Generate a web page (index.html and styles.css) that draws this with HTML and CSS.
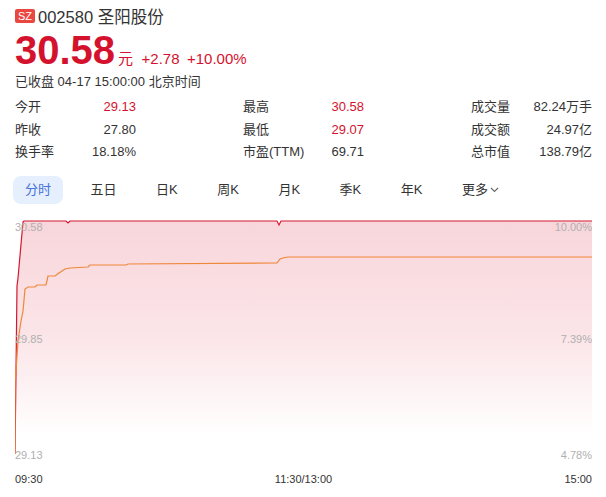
FILE: index.html
```html
<!DOCTYPE html>
<html lang="zh-CN">
<head>
  <meta charset="UTF-8" />
  <meta name="viewport" content="width=device-width, initial-scale=1" />
  <title>圣阳股份 002580</title>
  <link rel="stylesheet" href="styles.css">
</head>
<body>
  <div class="quote">
    <div class="title-row">
      <span class="market">SZ</span>
      <span class="name">002580 圣阳股份</span>
    </div>

    <div class="price-row">
      <span class="price">30.58</span><span class="unit">元</span>
      <span class="change">+2.78</span>
      <span class="change">+10.00%</span>
    </div>

    <div class="status">已收盘 04-17 15:00:00 北京时间</div>

    <div class="stats">
      <div class="stat-col">
        <div class="stat"><span>今开</span><span class="up">29.13</span></div>
        <div class="stat"><span>昨收</span><span>27.80</span></div>
        <div class="stat"><span>换手率</span><span>18.18%</span></div>
      </div>
      <div class="stat-col">
        <div class="stat"><span>最高</span><span class="up">30.58</span></div>
        <div class="stat"><span>最低</span><span class="up">29.07</span></div>
        <div class="stat"><span>市盈(TTM)</span><span>69.71</span></div>
      </div>
      <div class="stat-col">
        <div class="stat"><span>成交量</span><span>82.24万手</span></div>
        <div class="stat"><span>成交额</span><span>24.97亿</span></div>
        <div class="stat"><span>总市值</span><span>138.79亿</span></div>
      </div>
    </div>

    <div class="tabs">
      <span class="tab active">分时</span>
      <span class="tab">五日</span>
      <span class="tab">日K</span>
      <span class="tab">周K</span>
      <span class="tab">月K</span>
      <span class="tab">季K</span>
      <span class="tab">年K</span>
      <span class="tab">更多<svg class="chev" width="9" height="6" viewBox="0 0 9 6"><polyline points="1,1 4.5,4.5 8,1" fill="none" stroke="#666" stroke-width="1.1"/></svg></span>
    </div>

    <div class="chart">
      <svg width="577" height="240" viewBox="0 0 577 240">
        <defs>
          <linearGradient id="fill" x1="0" y1="0" x2="0" y2="1">
            <stop offset="0" stop-color="#f8d6db" />
            <stop offset="0.5" stop-color="#fbe5e8" />
            <stop offset="0.92" stop-color="#ffffff" />
          </linearGradient>
        </defs>
        <!-- price area -->
        <polygon fill="url(#fill)" points="0,237 1,154 2,69 3,61 8,5 9,4 51,4 53,6 55,4 262,4 264,8 266,4 577,4 577,237" />
        <polyline fill="none" stroke="#d4182f" stroke-width="1.2" points="0,237 1,154 2,69 3,61 8,5 9,4 51,4 53,6 55,4 262,4 264,8 266,4 577,4" />
        <!-- average -->
        <polyline fill="none" stroke="#ef8738" stroke-width="1.2" points="0,237 0,164 1,154 3,124 6,104 8,94 10,72 13,70 20,70 22,68 31,68 33,59 40,59 44,56 50,52 55,51 73,50 75,48 111,48 113,47 262,46 265,42 268,41 273,40 577,40" />
      </svg>
      <span class="axis-label left" style="top:4px">30.58</span>
      <span class="axis-label left" style="top:116px">29.85</span>
      <span class="axis-label left" style="top:232px">29.13</span>
      <span class="axis-label right" style="top:4px">10.00%</span>
      <span class="axis-label right" style="top:116px">7.39%</span>
      <span class="axis-label right" style="top:232px">4.78%</span>
    </div>

    <div class="time-axis">
      <span>09:30</span>
      <span>11:30/13:00</span>
      <span>15:00</span>
    </div>
  </div>
</body>
</html>
```

FILE: styles.css
```css
* {
  box-sizing: border-box;
}
body {
  margin: 0;
  background: #fff;
  color: #333;
  font-family: "Liberation Sans", Arial, "Noto Sans CJK SC", sans-serif;
}
.quote {
  width: 606px;
  padding: 5px 14px 0 15px;
}
.title-row {
  display: flex;
  align-items: center;
  height: 22px;
}
.market {
  display: inline-block;
  width: 20px;
  height: 14px;
  line-height: 14px;
  border-radius: 2px;
  background: #e8483f;
  color: #fff;
  font-size: 11px;
  text-align: center;
  margin-right: 3px;
}
.name {
  font-size: 16.5px;
  color: #333;
}
.price-row {
  margin-top: 3px;
  height: 40px;
  line-height: 40px;
  color: #d4122e;
  white-space: nowrap;
}
.price {
  font-size: 40px;
  font-weight: bold;
}
.unit {
  font-size: 15px;
  margin-left: 3px;
  margin-right: 4px;
}
.change {
  font-size: 15px;
  margin-right: 3px;
}
.status {
  margin-top: 3px;
  font-size: 13px;
  line-height: 18px;
  color: #333;
}
.stats {
  margin-top: 5px;
  display: flex;
  justify-content: space-between;
}
.stat-col {
  width: 121px;
}
.stat {
  display: flex;
  justify-content: space-between;
  font-size: 13px;
  line-height: 22.5px;
  white-space: nowrap;
  color: #333;
}
.stat .up {
  color: #d4122e;
}
.tabs {
  margin-top: 12px;
  margin-left: -2px;
  display: flex;
  gap: 15.5px;
}
.tab {
  height: 28px;
  line-height: 28px;
  padding: 0 12px;
  font-size: 13px;
  color: #333;
  border-radius: 8px;
  display: flex;
  align-items: center;
}
.tab.active {
  background: #e5effd;
  color: #4471db;
}
.chev {
  margin-left: 2px;
}
.chart {
  position: relative;
  margin-top: 13px;
  width: 577px;
  height: 240px;
}
.chart svg {
  display: block;
}
.axis-label {
  position: absolute;
  font-size: 11px;
  line-height: 13px;
  color: #b0b0b0;
}
.axis-label.left {
  left: 0;
}
.axis-label.right {
  right: 0;
}
.time-axis {
  margin-top: 16px;
  width: 577px;
  display: flex;
  justify-content: space-between;
  font-size: 11px;
  line-height: 13px;
  color: #333;
}
```
